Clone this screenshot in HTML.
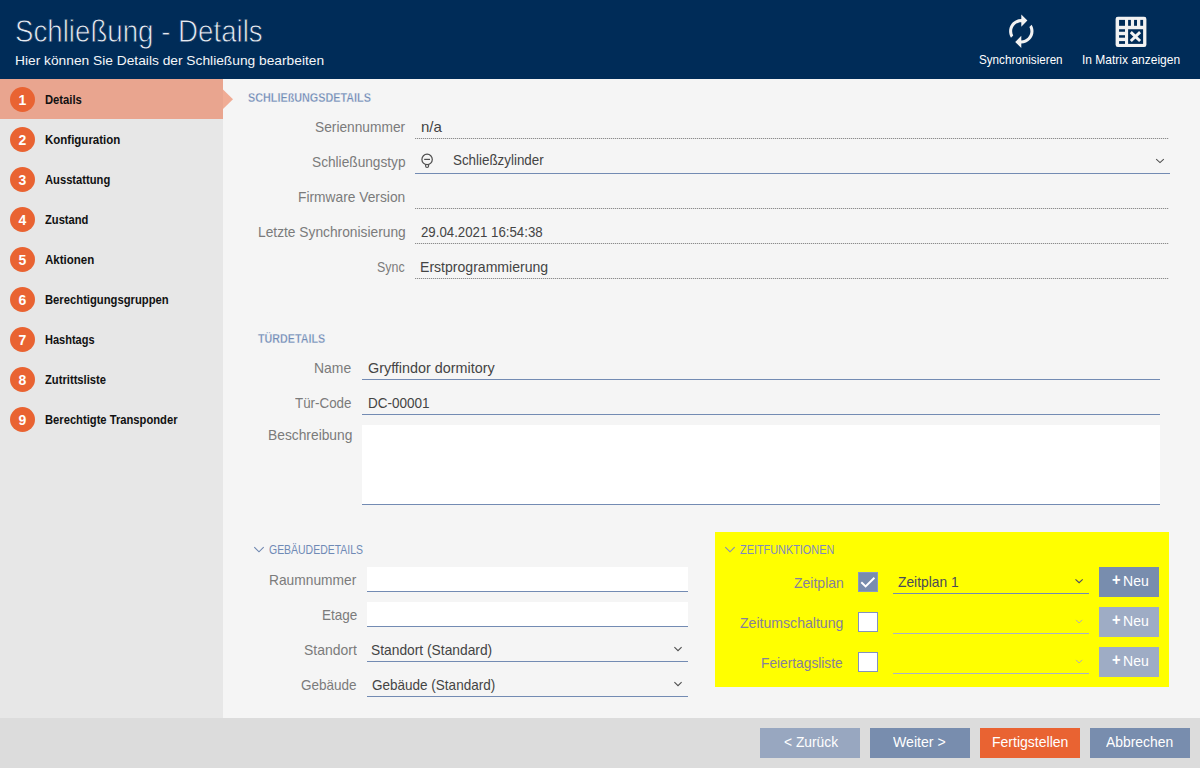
<!DOCTYPE html>
<html lang="de">
<head>
<meta charset="utf-8">
<title>Schließung - Details</title>
<style>
html,body{margin:0;padding:0;}
body{width:1200px;height:768px;overflow:hidden;position:relative;background:#f5f5f5;font-family:"Liberation Sans",sans-serif;font-size:14px;color:#333;}
.abs{position:absolute;}
.tx{position:absolute;white-space:nowrap;transform-origin:0 0;line-height:20px;}
#header{position:absolute;left:0;top:0;width:1200px;height:79px;background:#002c58;}
#sidebar{position:absolute;left:0;top:79px;width:223px;height:639px;background:#e7e7e7;}
#footer{position:absolute;left:0;top:718px;width:1200px;height:50px;background:#dcdcdc;}
.nav{position:absolute;left:0;width:223px;height:40px;}
.nav.active{background:#e9a58f;}
.c{position:absolute;left:10px;width:25px;height:25px;border-radius:50%;background:#e96332;color:#fff;font-weight:bold;font-size:14px;line-height:27px;text-align:center;}
.dot{position:absolute;height:1px;background-image:linear-gradient(to right,#8c8c8c 0,#8c8c8c 1px,#dedede 1px,#dedede 2px);background-size:2px 1px;}
.line{position:absolute;height:1px;background:#738bb3;}
.box{position:absolute;background:#fff;border-bottom:1px solid #738bb3;}
.btn{position:absolute;}
</style>
</head>
<body>
<header>
<div id="header"></div>
<svg class="abs" style="left:1002.7px;top:13px;" width="36.6" height="36.6" viewBox="0 0 24 24"><path fill="#f2f2f2" d="M12 6v3l4-4-4-4v3c-4.420 0-8 3.580-8 8 0 1.570.46 3.030 1.240 4.260L6.700 14.800c-.45-.83-.7-1.790-.7-2.800 0-3.310 2.690-6 6-6zm6.760 1.740L17.300 9.200c.44.84.7 1.790.7 2.800 0 3.310-2.690 6-6 6v-3l-4 4 4 4v-3c4.420 0 8-3.580 8-8 0-1.570-.46-3.030-1.240-4.260z"/></svg>
<svg class="abs" style="left:1115px;top:16px;" width="32" height="32" viewBox="0 0 32 32">
  <rect x="0.600" y="0.750" width="30.800" height="30.250" rx="2.200" fill="#f2f2f2"/>
  <g fill="#002c58">
    <rect x="4.060" y="3.900" width="5.940" height="5.900"/>
    <rect x="13.100" y="3.900" width="2.800" height="5.900"/>
    <rect x="19.060" y="3.900" width="2.940" height="5.900"/>
    <rect x="25.300" y="3.900" width="2.800" height="5.900"/>
    <rect x="4.060" y="13.250" width="5.940" height="2.500"/>
    <rect x="4.060" y="19.200" width="5.940" height="2.500"/>
    <rect x="4.060" y="25.100" width="5.940" height="2.800"/>
    <rect x="13.100" y="13.250" width="15" height="14.650"/>
  </g>
  <path d="M15.800 16.100 L25.100 25 M25.100 16.100 L15.800 25" stroke="#f2f2f2" stroke-width="2.900" fill="none"/>
</svg>

<div class="tx" style="left:15.2px;top:22px;font-size:31px;color:#e6ebf2;-webkit-text-stroke:0.8px #002c58;transform:scaleX(0.8928);">Schließung - Details</div>
<div class="tx" style="left:14.6px;top:51px;font-size:13.5px;color:#f4f6f9;transform:scaleX(1.0195);">Hier können Sie Details der Schließung bearbeiten</div>
<div class="tx" style="left:979.0px;top:50px;font-size:13px;color:#ffffff;transform:scaleX(0.8968);">Synchronisieren</div>
<div class="tx" style="left:1081.5px;top:50px;font-size:13px;color:#ffffff;transform:scaleX(0.9238);">In Matrix anzeigen</div>
</header>

<nav>
<div id="sidebar">
  <div class="nav active" style="top:0"></div>
</div>
<svg class="abs" style="left:223px;top:89px;" width="10" height="21" viewBox="0 0 10 21"><path d="M0 0.400 L10 10.200 L0 20 Z" fill="#f0ac95"/></svg>
<div class="c" style="top:87px">1</div>
<div class="c" style="top:127px">2</div>
<div class="c" style="top:167px">3</div>
<div class="c" style="top:207px">4</div>
<div class="c" style="top:247px">5</div>
<div class="c" style="top:287px">6</div>
<div class="c" style="top:327px">7</div>
<div class="c" style="top:367px">8</div>
<div class="c" style="top:407px">9</div>

<div class="tx" style="left:45.3px;top:90px;font-size:13px;color:#111111;font-weight:bold;transform:scaleX(0.8630);">Details</div>
<div class="tx" style="left:45.3px;top:130px;font-size:13px;color:#111111;font-weight:bold;transform:scaleX(0.8836);">Konfiguration</div>
<div class="tx" style="left:45.3px;top:170px;font-size:13px;color:#111111;font-weight:bold;transform:scaleX(0.8606);">Ausstattung</div>
<div class="tx" style="left:45.3px;top:210px;font-size:13px;color:#111111;font-weight:bold;transform:scaleX(0.8582);">Zustand</div>
<div class="tx" style="left:45.3px;top:250px;font-size:13px;color:#111111;font-weight:bold;transform:scaleX(0.8855);">Aktionen</div>
<div class="tx" style="left:45.3px;top:290px;font-size:13px;color:#111111;font-weight:bold;transform:scaleX(0.8650);">Berechtigungsgruppen</div>
<div class="tx" style="left:45.3px;top:330px;font-size:13px;color:#111111;font-weight:bold;transform:scaleX(0.8466);">Hashtags</div>
<div class="tx" style="left:45.3px;top:370px;font-size:13px;color:#111111;font-weight:bold;transform:scaleX(0.8620);">Zutrittsliste</div>
<div class="tx" style="left:45.3px;top:410px;font-size:13px;color:#111111;font-weight:bold;transform:scaleX(0.8611);">Berechtigte Transponder</div>
</nav>

<main>
<!-- field lines -->
<div class="dot" style="left:415px;width:754px;top:138px;"></div>
<div class="line" style="left:415px;width:755px;top:173px;"></div>
<div class="dot" style="left:415px;width:754px;top:208px;"></div>
<div class="dot" style="left:415px;width:754px;top:243px;"></div>
<div class="dot" style="left:415px;width:754px;top:278px;"></div>

<div class="line" style="left:362px;width:798px;top:379px;"></div>
<div class="line" style="left:362px;width:798px;top:414px;"></div>
<div class="box" style="left:362px;width:798px;top:425px;height:79px;"></div>

<div class="box" style="left:367px;width:321px;top:567px;height:24px;"></div>
<div class="box" style="left:367px;width:321px;top:602px;height:24px;"></div>
<div class="line" style="left:367px;width:321px;top:661px;"></div>
<div class="line" style="left:367px;width:321px;top:696px;"></div>

<!-- yellow zone -->
<div class="abs" style="left:715px;top:532px;width:454px;height:155px;background:#ffff00;"></div>
<div class="abs" style="left:858px;top:572px;width:18px;height:18px;background:#788cae;border:1px solid #8799c4;"></div>
<div class="abs" style="left:858px;top:612px;width:18px;height:18px;background:#fff;border:1px solid #8292c0;"></div>
<div class="abs" style="left:858px;top:652px;width:18px;height:18px;background:#fff;border:1px solid #8292c0;"></div>
<div class="line" style="left:893px;width:196px;top:593px;"></div>
<div class="line" style="left:893px;width:196px;top:633px;background:#aab3c6;"></div>
<div class="line" style="left:893px;width:196px;top:673px;background:#aab3c6;"></div>
<div class="btn" style="left:1099px;top:567px;width:60px;height:30px;background:#788dae;"></div>
<div class="btn" style="left:1099px;top:607px;width:60px;height:30px;background:#9eacc5;"></div>
<div class="btn" style="left:1099px;top:647px;width:60px;height:30px;background:#9eacc5;"></div>

<!-- small icons -->
<svg class="abs" style="left:0;top:0;pointer-events:none;" width="1200" height="768" viewBox="0 0 1200 768" fill="none">
  <g stroke="#4d4d4d" stroke-width="1.050">
    <circle cx="427.100" cy="159.400" r="5.200" stroke-width="1.200"/>
    <path d="M424.200 159.400 H430" stroke-width="1.200"/>
    <path d="M425.600 164.500 v1.400 a1.500 1.500 0 0 0 3 0 v-1.400" stroke-width="1.100"/>
    <path d="M1156.200 159.100 L1160 162.600 L1163.800 159.100"/>
    <path d="M674.400 647.200 L678 650.700 L681.600 647.200"/>
    <path d="M674.400 682.200 L678 685.700 L681.600 682.200"/>
    <path d="M1075.500 579.300 L1079.100 582.700 L1082.700 579.300" stroke="#4a4a66" stroke-width="1.050"/>
    <path d="M1076 619.900 L1079.100 623 L1082.200 619.900" stroke="#b4adb8" stroke-width="1"/>
    <path d="M1076 659.900 L1079.100 663 L1082.200 659.900" stroke="#b4adb8" stroke-width="1"/>
  </g>
  <path d="M861.300 582.300 L865.600 586.400 L874.400 577.700" stroke="#ffffff" stroke-width="2"/>
  <g stroke="#6f87b0" stroke-width="1.100">
    <path d="M254.300 547.200 L259 551.800 L263.700 547.200"/>
    <path d="M725.300 547.200 L730 551.800 L734.700 547.200" stroke="#7f89c0"/>
  </g>
</svg>
<div class="tx" style="left:248.0px;top:88px;font-size:12.8px;color:#6f8ab5;font-weight:bold;-webkit-text-stroke:0.3px #f5f5f5;transform:scaleX(0.8448);">SCHLIEßUNGSDETAILS</div>
<div class="tx" style="left:315.4px;top:117px;font-size:14.5px;color:#7b7b7b;transform:scaleX(0.9479);">Seriennummer</div>
<div class="tx" style="left:311.5px;top:152px;font-size:14.5px;color:#7b7b7b;transform:scaleX(0.9439);">Schließungstyp</div>
<div class="tx" style="left:297.8px;top:187px;font-size:14.5px;color:#7b7b7b;transform:scaleX(0.9505);">Firmware Version</div>
<div class="tx" style="left:257.9px;top:222px;font-size:14.5px;color:#7b7b7b;transform:scaleX(0.9497);">Letzte Synchronisierung</div>
<div class="tx" style="left:376.8px;top:257px;font-size:14.5px;color:#7b7b7b;transform:scaleX(0.8568);">Sync</div>
<div class="tx" style="left:421.1px;top:117px;font-size:14.5px;color:#444444;transform:scaleX(1.0369);">n/a</div>
<div class="tx" style="left:452.8px;top:150px;font-size:14.5px;color:#444444;transform:scaleX(0.9225);">Schließzylinder</div>
<div class="tx" style="left:421.3px;top:222px;font-size:14.5px;color:#444444;transform:scaleX(0.9143);">29.04.2021 16:54:38</div>
<div class="tx" style="left:420.3px;top:257px;font-size:14.5px;color:#444444;transform:scaleX(0.9695);">Erstprogrammierung</div>
<div class="tx" style="left:258.0px;top:329px;font-size:12.8px;color:#6f8ab5;font-weight:bold;-webkit-text-stroke:0.3px #f5f5f5;transform:scaleX(0.8375);">TÜRDETAILS</div>
<div class="tx" style="left:314.2px;top:358px;font-size:14.5px;color:#7b7b7b;transform:scaleX(0.9596);">Name</div>
<div class="tx" style="left:368.2px;top:358px;font-size:14.5px;color:#444444;transform:scaleX(0.9903);">Gryffindor dormitory</div>
<div class="tx" style="left:294.5px;top:393px;font-size:14.5px;color:#7b7b7b;transform:scaleX(0.9222);">Tür-Code</div>
<div class="tx" style="left:368.2px;top:393px;font-size:14.5px;color:#444444;transform:scaleX(0.9308);">DC-00001</div>
<div class="tx" style="left:268.0px;top:425px;font-size:14.5px;color:#7b7b7b;transform:scaleX(0.9518);">Beschreibung</div>
<div class="tx" style="left:269.2px;top:540px;font-size:12.8px;color:#6f8ab5;transform:scaleX(0.8174);">GEBÄUDEDETAILS</div>
<div class="tx" style="left:269.2px;top:570px;font-size:14.5px;color:#7b7b7b;transform:scaleX(0.9495);">Raumnummer</div>
<div class="tx" style="left:322.2px;top:605px;font-size:14.5px;color:#7b7b7b;transform:scaleX(0.9302);">Etage</div>
<div class="tx" style="left:303.5px;top:640px;font-size:14.5px;color:#7b7b7b;transform:scaleX(0.9630);">Standort</div>
<div class="tx" style="left:371.0px;top:640px;font-size:14.5px;color:#444444;transform:scaleX(0.9516);">Standort (Standard)</div>
<div class="tx" style="left:301.0px;top:675px;font-size:14.5px;color:#7b7b7b;transform:scaleX(0.9322);">Gebäude</div>
<div class="tx" style="left:372.0px;top:675px;font-size:14.5px;color:#444444;transform:scaleX(0.9318);">Gebäude (Standard)</div>
<div class="tx" style="left:740.0px;top:540px;font-size:12.8px;color:#7f89c0;transform:scaleX(0.8501);">ZEITFUNKTIONEN</div>
<div class="tx" style="left:793.9px;top:573px;font-size:14.5px;color:#86809c;transform:scaleX(0.9658);">Zeitplan</div>
<div class="tx" style="left:740.0px;top:613px;font-size:14.5px;color:#86809c;transform:scaleX(0.9717);">Zeitumschaltung</div>
<div class="tx" style="left:760.8px;top:653px;font-size:14.5px;color:#86809c;transform:scaleX(0.9471);">Feiertagsliste</div>
<div class="tx" style="left:898.2px;top:572px;font-size:14.5px;color:#4a4a5a;transform:scaleX(0.9526);">Zeitplan 1</div>
<div class="tx" style="left:1111.8px;top:570px;font-size:16px;color:#ffffff;font-weight:bold;transform:scaleX(0.9147);">+</div>
<div class="tx" style="left:1123.4px;top:571px;font-size:14.5px;color:#ffffff;transform:scaleX(0.9685);">Neu</div>
<div class="tx" style="left:1111.8px;top:610px;font-size:16px;color:#ffffff;font-weight:bold;transform:scaleX(0.9147);">+</div>
<div class="tx" style="left:1123.4px;top:611px;font-size:14.5px;color:#ffffff;transform:scaleX(0.9685);">Neu</div>
<div class="tx" style="left:1111.8px;top:650px;font-size:16px;color:#ffffff;font-weight:bold;transform:scaleX(0.9147);">+</div>
<div class="tx" style="left:1123.4px;top:651px;font-size:14.5px;color:#ffffff;transform:scaleX(0.9685);">Neu</div>
</main>

<footer>
<div id="footer"></div>
<div class="btn" style="left:760px;top:728px;width:100px;height:30px;background:#98a7c0;"></div>
<div class="btn" style="left:870px;top:728px;width:100px;height:30px;background:#788dae;"></div>
<div class="btn" style="left:980px;top:728px;width:100px;height:30px;background:#e96332;"></div>
<div class="btn" style="left:1090px;top:728px;width:100px;height:30px;background:#788dae;"></div>


<div class="tx" style="left:783.8px;top:732px;font-size:14.5px;color:#ffffff;transform:scaleX(0.9510);">&lt; Zurück</div>
<div class="tx" style="left:893.3px;top:732px;font-size:14.5px;color:#ffffff;transform:scaleX(0.9723);">Weiter &gt;</div>
<div class="tx" style="left:991.8px;top:732px;font-size:14.5px;color:#ffffff;transform:scaleX(0.9668);">Fertigstellen</div>
<div class="tx" style="left:1106.0px;top:732px;font-size:14.5px;color:#ffffff;transform:scaleX(0.9571);">Abbrechen</div>
</footer>
</body>
</html>
